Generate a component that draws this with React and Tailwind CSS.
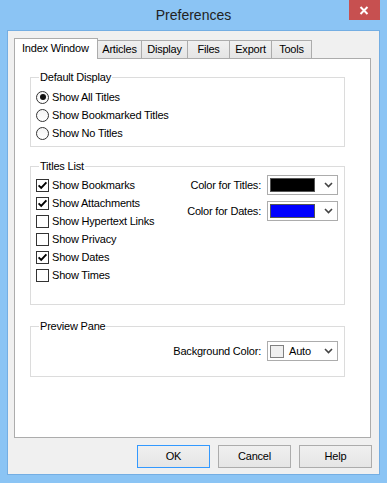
import React from "react";

function Chevron() {
  return (
    <svg width="9" height="6" viewBox="0 0 9 6" className="ml-auto mr-[4px]">
      <path d="M1 1 L4.5 4.5 L8 1" stroke="#444" strokeWidth="1.6" fill="none" />
    </svg>
  );
}

function Check({ checked, label }) {
  return (
    <div className="flex items-center h-[18px]">
      <span className="w-[13px] h-[13px] border border-[#333] bg-white flex items-center justify-center shrink-0">
        {checked && (
          <svg width="11" height="11" viewBox="0 0 11 11">
            <path d="M1.6 5.4 L4.2 8 L9.4 2.4" stroke="#000" strokeWidth="1.9" fill="none" />
          </svg>
        )}
      </span>
      <span className="ml-[3px]">{label}</span>
    </div>
  );
}

function Radio({ selected, label }) {
  return (
    <div className="flex items-center h-[18px]">
      <span className="w-[13px] h-[13px] rounded-full border border-[#333] bg-gradient-to-b from-[#f4f4f4] to-white flex items-center justify-center shrink-0">
        {selected && <span className="w-[6px] h-[6px] rounded-full bg-[#111]" />}
      </span>
      <span className="ml-[3px]">{label}</span>
    </div>
  );
}

function ColorCombo({ color }) {
  return (
    <div className="w-[71px] h-[20px] border border-[#acacac] bg-white flex items-center pl-[2px]">
      <span className={`w-[45px] h-[14px] border border-[#555] ${color}`} />
      <Chevron />
    </div>
  );
}

function Tab({ label, w }) {
  return (
    <div
      className={`${w} h-[18px] -ml-px border border-b-0 border-[#acacac] bg-gradient-to-b from-[#f0f0f0] to-[#e5e5e5] flex items-center justify-center`}
    >
      {label}
    </div>
  );
}

function Button({ label, primary }) {
  return (
    <div
      className={`w-[73px] h-[23px] border ${primary ? "border-[#3399ff]" : "border-[#acacac]"} bg-gradient-to-b from-[#f0f0f0] to-[#e5e5e5] flex items-center justify-center`}
    >
      {label}
    </div>
  );
}

export default function App() {
  return (
    <div className="w-[387px] h-[483px] bg-[#8bc4f4] flex flex-col font-['Liberation_Sans',Arial,sans-serif] text-[11px] tracking-[-0.2px] leading-[15px] text-black">
      {/* title bar */}
      <div className="h-[30px] flex justify-between">
        <div className="w-[38px]" />
        <div className="pt-[7px] text-[14px] tracking-normal leading-[17px] text-[#222]">Preferences</div>
        <div className="w-[31px] h-[20px] mr-[7px] bg-[#c75050] flex items-center justify-center">
          <svg width="10" height="9" viewBox="0 0 10 9">
            <path d="M1.5 1 L8.5 8 M8.5 1 L1.5 8" stroke="#fff" strokeWidth="2" />
          </svg>
        </div>
      </div>
      {/* client */}
      <div className="mx-[7px] h-[445px] border border-[#74aee3] bg-[#f0f0f0] flex flex-col pl-[6px] pr-[7px] pt-[7px]">
        <div className="mr-[1px] flex flex-col">
          {/* tabs */}
          <div className="flex items-end h-[20px]">
            <div className="w-[84px] h-[21px] -mb-px relative z-10 bg-white border border-b-0 border-[#acacac] flex items-center pl-[7px] pb-[2px]">
              Index Window
            </div>
            <Tab label="Articles" w="w-[45px]" />
            <Tab label="Display" w="w-[47px]" />
            <Tab label="Files" w="w-[43px]" />
            <Tab label="Export" w="w-[43px]" />
            <Tab label="Tools" w="w-[41px]" />
          </div>
          {/* panel */}
          <div className="h-[380px] bg-white border border-[#acacac] flex flex-col pl-[15px] pr-[25px] pt-[11px]">
            <fieldset className="border border-[#dcdcdc] pl-[5px] pt-[3px] pb-[4px]">
              <legend className="ml-[3px] px-[1px]">Default Display</legend>
              <Radio selected label="Show All Titles" />
              <Radio label="Show Bookmarked Titles" />
              <Radio label="Show No Titles" />
            </fieldset>
            <fieldset className="mt-[12px] border border-[#dcdcdc] pl-[5px] pr-[6px] pt-[1px] pb-[20px]">
              <legend className="ml-[3px] px-[1px]">Titles List</legend>
              <div className="flex justify-between">
                <div className="pt-[1px] flex flex-col">
                  <Check checked label="Show Bookmarks" />
                  <Check checked label="Show Attachments" />
                  <Check label="Show Hypertext Links" />
                  <Check label="Show Privacy" />
                  <Check checked label="Show Dates" />
                  <Check label="Show Times" />
                </div>
                <div className="flex flex-col gap-[6px]">
                  <div className="flex items-center justify-end gap-[6px] h-[20px]">
                    <span>Color for Titles:</span>
                    <ColorCombo color="bg-black" />
                  </div>
                  <div className="flex items-center justify-end gap-[6px] h-[20px]">
                    <span>Color for Dates:</span>
                    <ColorCombo color="bg-[#0000ff]" />
                  </div>
                </div>
              </div>
            </fieldset>
            <fieldset className="mt-[14px] border border-[#dcdcdc] pr-[6px] pt-[7px] pb-[15px]">
              <legend className="ml-[8px] px-[1px]">Preview Pane</legend>
              <div className="flex items-center justify-end gap-[6px]">
                <span>Background Color:</span>
                <div className="w-[71px] h-[20px] border border-[#acacac] bg-white flex items-center pl-[2px]">
                  <span className="w-[14px] h-[13px] border border-[#808080] bg-[#f0f0f0]" />
                  <span className="ml-[5px]">Auto</span>
                  <Chevron />
                </div>
              </div>
            </fieldset>
          </div>
        </div>
        {/* buttons */}
        <div className="mt-[7px] flex justify-end gap-[8px]">
          <Button label="OK" primary />
          <Button label="Cancel" />
          <Button label="Help" />
        </div>
      </div>
    </div>
  );
}
